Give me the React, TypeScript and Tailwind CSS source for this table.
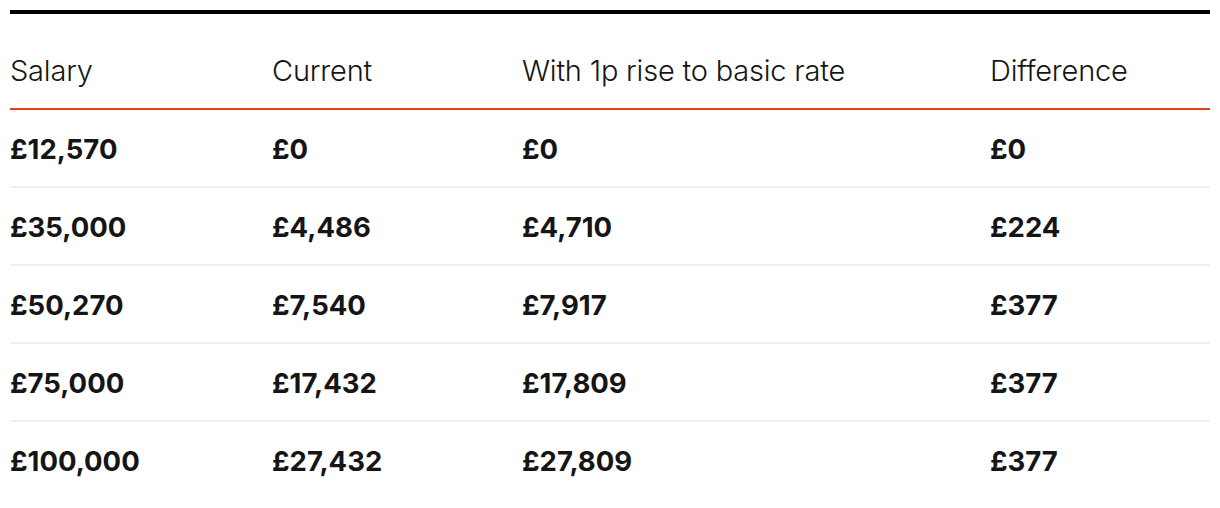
import React from "react";

const rows = [
  ["£12,570", "£0", "£0", "£0"],
  ["£35,000", "£4,486", "£4,710", "£224"],
  ["£50,270", "£7,540", "£7,917", "£377"],
  ["£75,000", "£17,432", "£17,809", "£377"],
  ["£100,000", "£27,432", "£27,809", "£377"],
];

const headers = ["Salary", "Current", "With 1p rise to basic rate", "Difference"];

export default function App() {
  return (
    <div className="bg-white px-[10px] pt-[10px] font-['Inter',sans-serif] text-[#151515]">
      <table className="w-[1200px] border-collapse border-t-4 border-black">
        <colgroup>
          <col className="w-[262px]" />
          <col className="w-[250px]" />
          <col className="w-[468px]" />
          <col className="w-[220px]" />
        </colgroup>
        <thead>
          <tr className="border-b-2 border-[#e0401c]">
            {headers.map((h) => (
              <th
                key={h}
                className="h-[97px] pt-[20px] text-left align-middle text-[29px] font-light tracking-[-0.2px]"
              >
                {h}
              </th>
            ))}
          </tr>
        </thead>
        <tbody>
          {rows.map((r, i) => (
            <tr
              key={i}
              className={i < rows.length - 1 ? "border-b-2 border-[#efefef]" : ""}
            >
              {r.map((c, j) => (
                <td
                  key={j}
                  className="h-[78px] pt-[3px] text-left align-middle text-[27.5px] font-bold"
                >
                  {c}
                </td>
              ))}
            </tr>
          ))}
        </tbody>
      </table>
    </div>
  );
}
